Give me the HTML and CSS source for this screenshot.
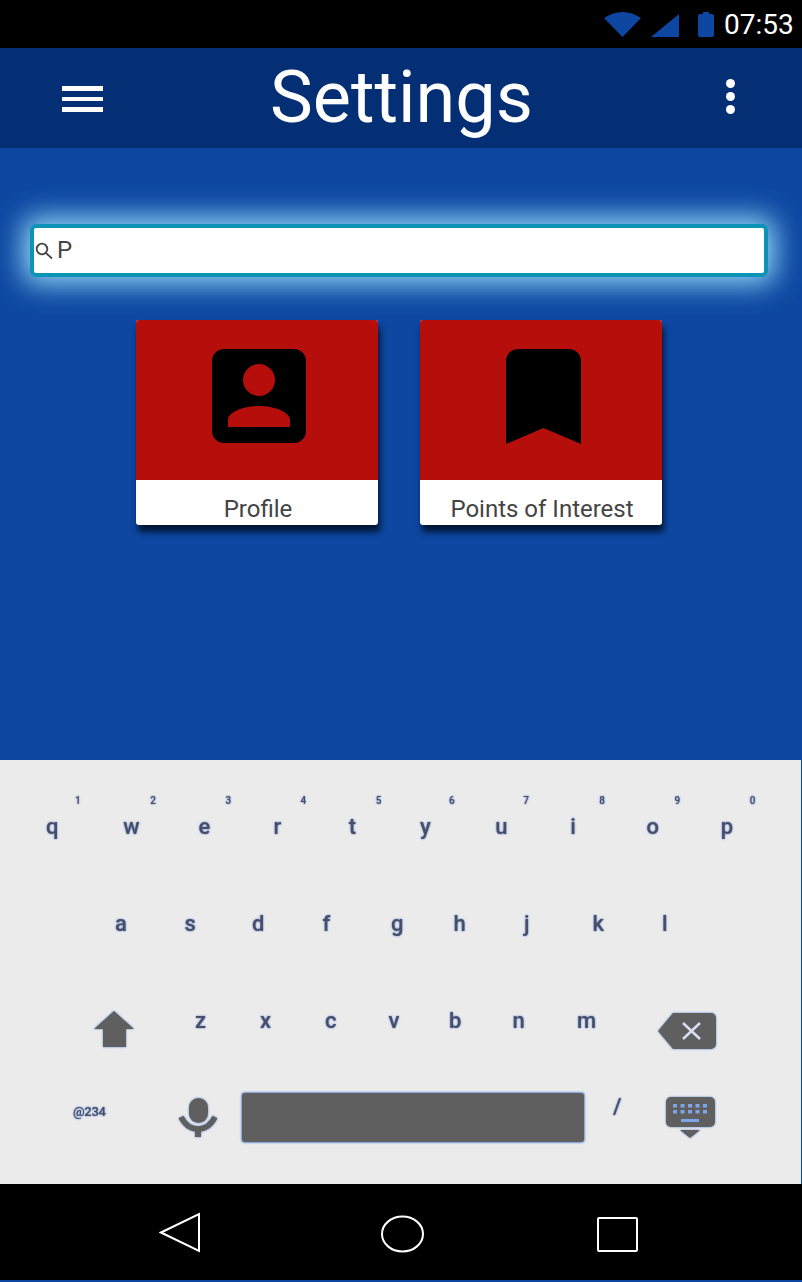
FILE: index.html
```html
<!DOCTYPE html>
<html lang="en">
<head>
<meta charset="utf-8">
<title>Settings</title>
<link rel="stylesheet" href="styles.css">
</head>
<body>
<div class="status">
  <svg class="st-wifi" width="37" height="25" viewBox="0 0 37 25"><path d="M0 6Q18.500-6 37 6L18.500 25Z"/></svg>
  <svg class="st-signal" width="28" height="23" viewBox="0 0 28 23"><path d="M0 23L28 0V23Z"/></svg>
  <svg class="st-batt" width="16" height="25" viewBox="0 0 16 25"><path d="M5 0h6v2h3a2 2 0 0 1 2 2v19a2 2 0 0 1-2 2H2a2 2 0 0 1-2-2V4a2 2 0 0 1 2-2h3Z"/></svg>
  <span class="clock">07:53</span>
</div>
<header class="appbar">
  <div class="burger"><i></i><i></i><i></i></div>
  <h1 class="title">Settings</h1>
  <div class="dots"><i></i><i></i><i></i></div>
</header>
<main class="main">
  <div class="search">
    <svg class="search-ico" width="18" height="18" viewBox="0 0 18 18"><circle cx="7" cy="7" r="5.300"/><path d="M11 11L17 16.500"/></svg>
    <span class="search-text">P</span>
  </div>
  <div class="cards">
    <div class="card">
      <div class="card-top">
        <svg width="94" height="94" viewBox="0 0 94 94"><path fill-rule="evenodd" d="M12 0H82A12 12 0 0 1 94 12V82A12 12 0 0 1 82 94H12A12 12 0 0 1 0 82V12A12 12 0 0 1 12 0ZM47 15A16 16 0 1 0 47 47A16 16 0 1 0 47 15ZM16 78H78V71C78 63 62 57 47 57S16 63 16 71Z"/></svg>
      </div>
      <div class="card-label">Profile</div>
    </div>
    <div class="card">
      <div class="card-top">
        <svg width="75" height="95" viewBox="0 0 75 95"><path d="M0 95V12A12 12 0 0 1 12 0H63A12 12 0 0 1 75 12V95L37.500 79Z"/></svg>
      </div>
      <div class="card-label">Points of Interest</div>
    </div>
  </div>
</main>
<section class="keyboard">
  <div class="kb-row1">
    <div class="key"><small>1</small><span>q</span></div>
    <div class="key"><small>2</small><span>w</span></div>
    <div class="key"><small>3</small><span>e</span></div>
    <div class="key"><small>4</small><span>r</span></div>
    <div class="key"><small>5</small><span>t</span></div>
    <div class="key"><small>6</small><span>y</span></div>
    <div class="key"><small>7</small><span>u</span></div>
    <div class="key"><small>8</small><span>i</span></div>
    <div class="key"><small>9</small><span>o</span></div>
    <div class="key"><small>0</small><span>p</span></div>
  </div>
  <div class="kb-row2">
    <span>a</span><span>s</span><span>d</span><span>f</span><span>g</span><span>h</span><span>j</span><span>k</span><span>l</span>
  </div>
  <div class="kb-row3">
    <svg class="ink shift" width="42" height="38" viewBox="0 0 42 38"><path d="M21 1L41 19H33V37H10V19H1Z"/></svg>
    <div class="kb-letters">
      <span>z</span><span>x</span><span>c</span><span>v</span><span>b</span><span>n</span><span>m</span>
    </div>
    <svg class="ink backspace" width="60" height="38" viewBox="0 0 60 38"><path d="M1 19L16 1H54A5 5 0 0 1 59 6V32A5 5 0 0 1 54 37H16Z"/><path class="bs-x" d="M26 11L43 27M43 11L26 27"/></svg>
  </div>
  <div class="kb-row4">
    <span class="sym">@234</span>
    <svg class="ink mic" width="40" height="40" viewBox="0 0 40 40"><rect x="11" y="1" width="19" height="25" rx="9.500"/><path class="mic-arc" d="M3 20C7 28 13 32 20 32S33 28 37 20"/><rect x="17" y="30" width="6" height="10"/></svg>
    <div class="space"></div>
    <span class="slash">/</span>
    <svg class="ink kb-ico" width="50" height="42" viewBox="0 0 50 42"><rect x="1" y="0" width="49" height="30" rx="5"/><g class="kb-dots"><rect x="8" y="7" width="4" height="3.500"/><rect x="15.500" y="7" width="4" height="3.500"/><rect x="23" y="7" width="4" height="3.500"/><rect x="30.500" y="7" width="4" height="3.500"/><rect x="38" y="7" width="4" height="3.500"/><rect x="8" y="13" width="4" height="3.500"/><rect x="15.500" y="13" width="4" height="3.500"/><rect x="23" y="13" width="4" height="3.500"/><rect x="30.500" y="13" width="4" height="3.500"/><rect x="38" y="13" width="4" height="3.500"/><rect x="16" y="22" width="18" height="3"/></g><path d="M15 33H35L25 41Z"/></svg>
  </div>
</section>
<nav class="navbar">
  <svg width="42" height="41" viewBox="0 0 42 41" class="nav-back"><path d="M2 20.500L40 2V39Z"/></svg>
  <svg width="45" height="38" viewBox="0 0 45 38" class="nav-home"><ellipse cx="22.500" cy="19" rx="20.500" ry="17.500"/></svg>
  <svg width="42" height="36" viewBox="0 0 42 36" class="nav-recent"><rect x="1" y="1" width="39" height="33" rx="1"/></svg>
</nav>
</body>
</html>
```
FILE: styles.css
```css
* { box-sizing: border-box; }
html, body { margin: 0; padding: 0; }
body {
  width: 802px;
  height: 1282px;
  overflow: hidden;
  background: #0d47a1;
  font-family: Roboto, "Liberation Sans", sans-serif;
}

/* status bar */
.status {
  height: 48px;
  background: #000;
  display: flex;
  align-items: flex-start;
  color: #fff;
}
.status svg { fill: #0d47a1; flex: none; }
.st-wifi { margin: 12px 0 0 604px; }
.st-signal { margin: 14px 0 0 10px; }
.st-batt { margin: 12px 0 0 19px; }
.clock {
  margin-left: 10px;
  font-size: 28px;
  line-height: 50px;
}

/* app bar */
.appbar {
  height: 100px;
  background: #042f75;
  display: flex;
  align-items: center;
}
.burger {
  margin: 2px 0 0 62px;
  width: 41px;
  display: flex;
  flex-direction: column;
  gap: 6px;
}
.burger i { display: block; height: 4.500px; background: #fff; }
.title {
  margin: -2px 0 0 167px;
  font-size: 72px;
  font-weight: 400;
  line-height: 99px;
  color: #fff;
}
.dots {
  margin: -4px 0 0 193px;
  display: flex;
  flex-direction: column;
  gap: 4px;
}
.dots i { display: block; width: 9px; height: 9px; border-radius: 50%; background: #fff; }

/* main */
.main {
  height: 612px;
  background: #0d47a1;
  padding-top: 76px;
}
.search {
  margin-left: 30px;
  width: 738px;
  height: 53px;
  background: #fff;
  border: 4px solid #0c94b6;
  border-radius: 6px;
  box-shadow: 0 0 28px 7px #93d8f8;
  display: flex;
  align-items: center;
}
.search-ico { fill: none; stroke: #444; stroke-width: 1.800; margin-left: 1px; margin-top: 1px; flex: none; }
.search-text { font-size: 24px; color: #444; margin: -2px 0 0 4px; line-height: 42px; }
.cards {
  margin: 43px 0 0 136px;
  display: flex;
  gap: 42px;
}
.card {
  width: 242px;
  height: 205px;
  background: #fff;
  border-radius: 3px;
  box-shadow: 2px 7px 6px rgba(2, 15, 40, .9);
}
.card-top {
  height: 160px;
  background: #b60e0b;
  border-radius: 3px 3px 0 0;
  display: flex;
  justify-content: center;
  padding: 29px 0 0 4px;
}
.card-top svg { fill: #000; }
.card-label {
  text-align: center;
  font-size: 24px;
  line-height: 58px;
  height: 45px;
  padding-left: 2px;
  color: #444;
  overflow: hidden;
}

/* keyboard */
.keyboard {
  width: 801px;
  height: 424px;
  background: #ebebeb;
  padding-top: 34px;
  font-weight: 500;
  color: #484e66;
}
.keyboard span {
  font-size: 22px;
  line-height: 30px;
  filter: blur(.75px);
  text-shadow: 0 0 2px #3f6cc8;
  display: block;
}
.ink { fill: #5f5f5f; flex: none; filter: drop-shadow(0 0 1px #5f8ad8) blur(.6px); }
.kb-row1 {
  display: grid;
  grid-template-columns: 75.200px 75.200px 75.200px 75.200px 73.200px 74.200px 76.200px 75.200px 75.200px 75.200px;
  padding-left: 46px;
}
.key:nth-child(n+2):nth-child(-n+5) span { margin-left: 2px; }
.key:nth-child(7) span, .key:nth-child(9) span { margin-left: 1px; }
.key small {
  display: block;
  margin: 0 0 4px 29px;
  font-size: 10px;
  line-height: 14px;
  filter: blur(.7px);
  text-shadow: 0 0 2px #3f6cc8;
}
.kb-row2 {
  display: grid;
  grid-template-columns: 69.500px 67.500px 70.500px 68.500px 62.500px 70.500px 68.500px 69.500px 68.500px;
  padding-left: 115px;
  margin-top: 67px;
}
.kb-row3 {
  display: flex;
  align-items: flex-start;
  height: 87px;
  margin-top: 67px;
  padding-left: 93px;
}
.shift { margin-top: 4px; }
.kb-letters {
  display: grid;
  grid-template-columns: 65px 65px 63.500px 60.500px 63.500px 64.500px 63.500px;
  margin-left: 60px;
}
.backspace { margin: 6px 0 0 16.500px; }
.bs-x { fill: none; stroke: #d5def2; stroke-width: 2.500; }
.kb-row4 {
  display: flex;
  align-items: flex-start;
  height: 49px;
  padding-left: 73px;
}
.keyboard .sym { font-size: 13px; line-height: 14px; margin-top: 12px; width: 32px; letter-spacing: -.3px; filter: blur(.5px); }
.mic { margin: 4px 0 0 73px; }
.mic-arc { fill: none; stroke: #5f5f5f; stroke-width: 5.500; }
.space {
  margin-left: 24px;
  width: 342px;
  height: 49px;
  background: #5f5f5f;
  border-radius: 3px;
  box-shadow: 0 0 2px 1px #7096da;
  filter: blur(.5px);
}
.keyboard .slash { margin: 0 0 0 29px; width: 52px; font-size: 22px; line-height: 28px; }
.kb-ico { margin: 4px 0 0 0; }
.kb-dots { fill: #7fa5e6; }

/* nav bar */
.navbar {
  height: 96px;
  background: #000;
  display: flex;
  align-items: flex-start;
}
.navbar svg { fill: none; stroke: #fff; stroke-width: 2; flex: none; }
.nav-back { margin: 28px 0 0 159px; }
.nav-home { margin: 31px 0 0 179px; }
.nav-recent { margin: 33px 0 0 172px; }
```
